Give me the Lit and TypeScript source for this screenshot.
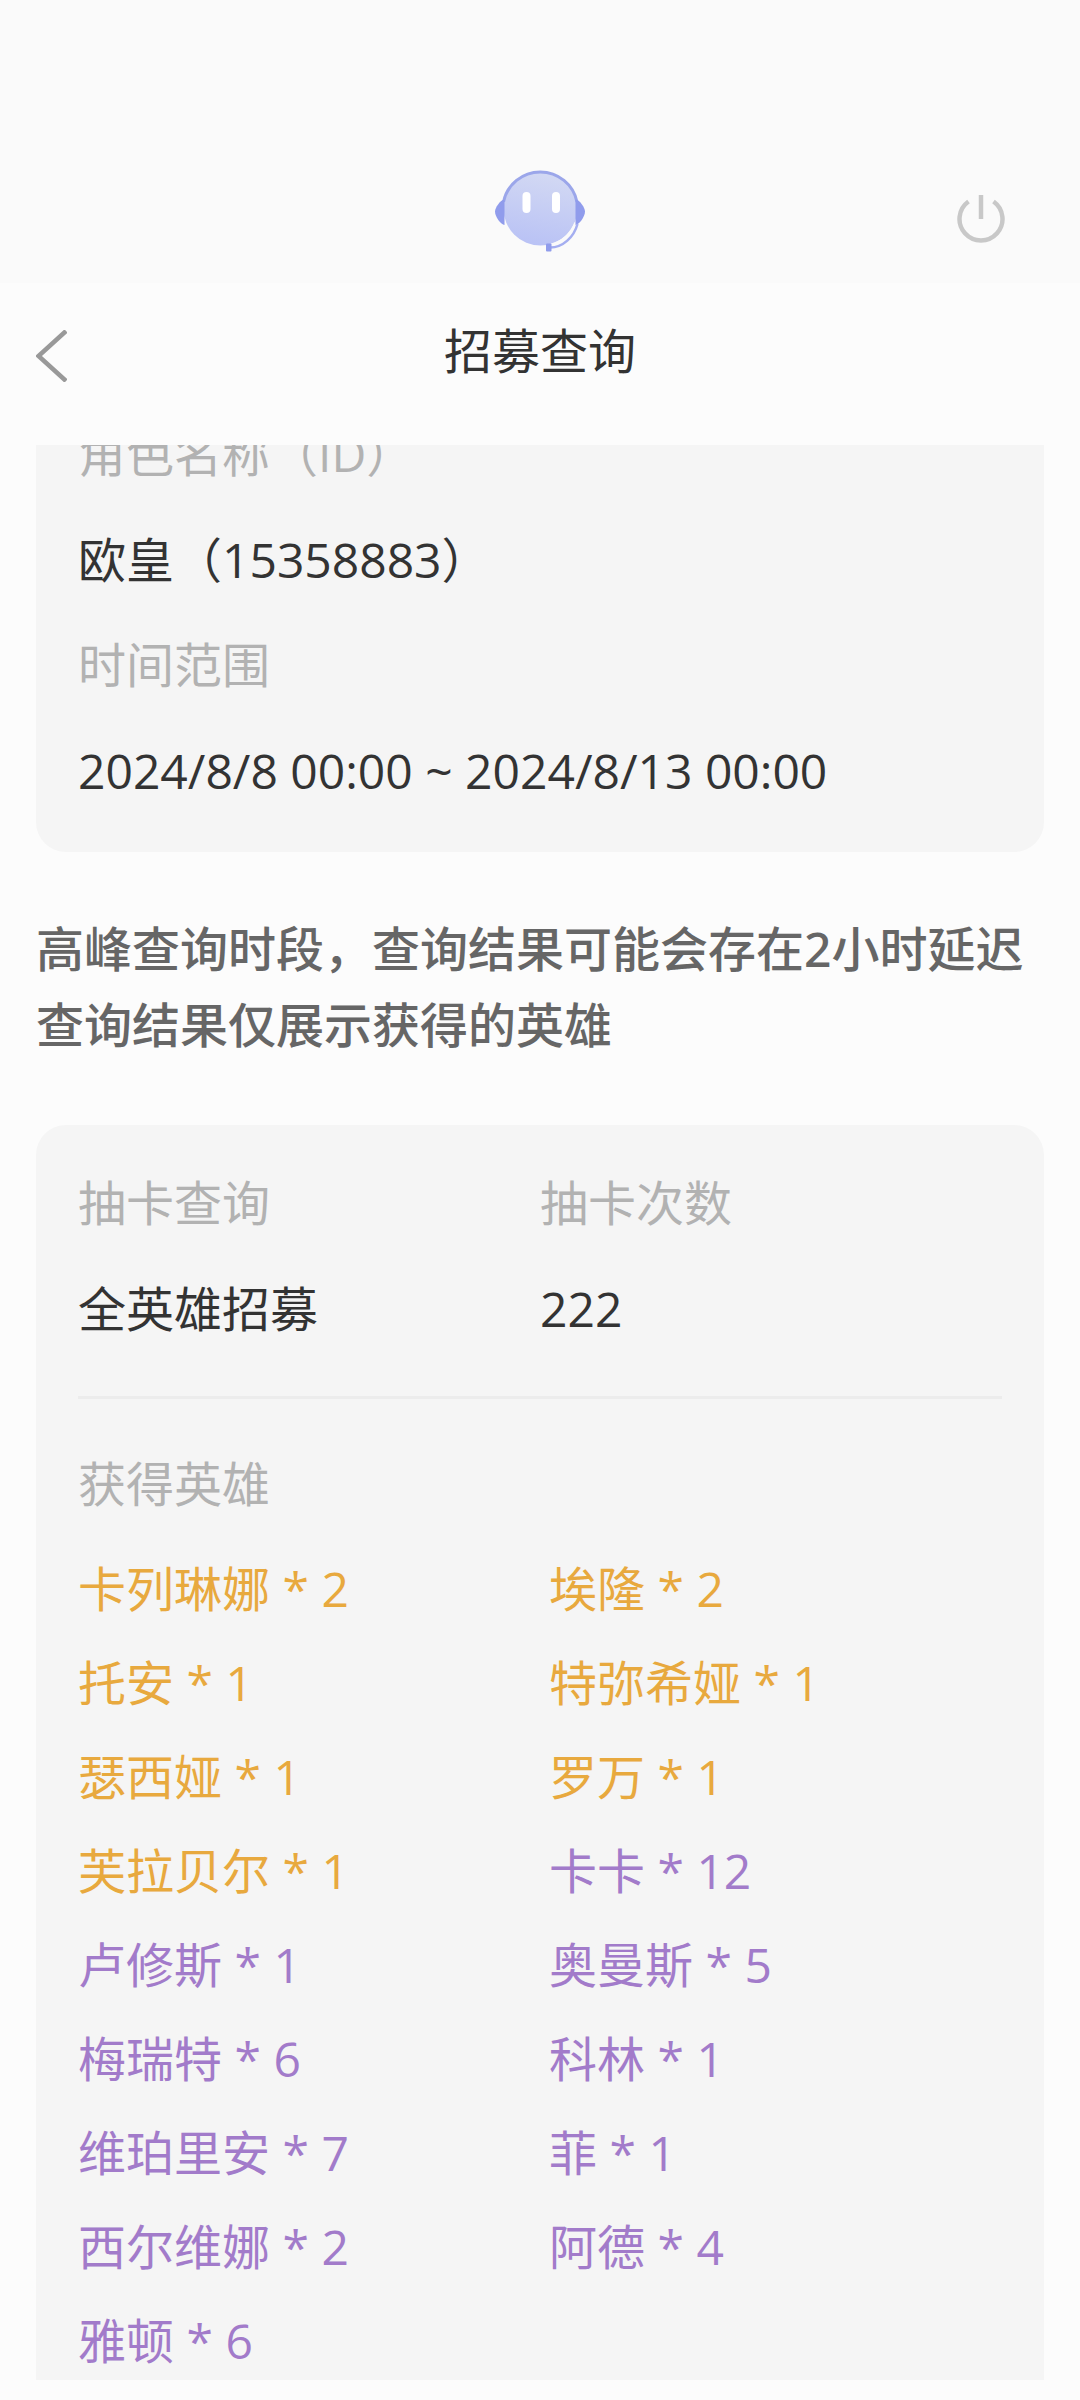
import { LitElement, html, css } from "lit";
import { customElement, property, query } from "lit/decorators.js";
import { classMap } from "lit/directives/class-map.js";

interface Hero {
  name: string;
  count: number;
  tier: "gold" | "purple";
}

const HEROES: Hero[] = [
  { name: "卡列琳娜", count: 2, tier: "gold" },
  { name: "埃隆", count: 2, tier: "gold" },
  { name: "托安", count: 1, tier: "gold" },
  { name: "特弥希娅", count: 1, tier: "gold" },
  { name: "瑟西娅", count: 1, tier: "gold" },
  { name: "罗万", count: 1, tier: "gold" },
  { name: "芙拉贝尔", count: 1, tier: "gold" },
  { name: "卡卡", count: 12, tier: "purple" },
  { name: "卢修斯", count: 1, tier: "purple" },
  { name: "奥曼斯", count: 5, tier: "purple" },
  { name: "梅瑞特", count: 6, tier: "purple" },
  { name: "科林", count: 1, tier: "purple" },
  { name: "维珀里安", count: 7, tier: "purple" },
  { name: "菲", count: 1, tier: "purple" },
  { name: "西尔维娜", count: 2, tier: "purple" },
  { name: "阿德", count: 4, tier: "purple" },
  { name: "雅顿", count: 6, tier: "purple" },
];

@customElement("app-root")
export class AppRoot extends LitElement {
  @property({ attribute: false }) heroes: Hero[] = HEROES;

  @query(".scroller") private scroller!: HTMLElement;

  static styles = css`
    :host {
      display: flex;
      flex-direction: column;
      box-sizing: border-box;
      height: 100vh;
      padding-bottom: 20px;
      background: #fcfcfc;
      color: #333;
      font-family: "Open Sans", "Noto Sans CJK SC", sans-serif;
      font-size: 48px;
    }
    button {
      display: flex;
      align-items: center;
      justify-content: center;
      margin: 0;
      padding: 0;
      border: 0;
      background: none;
      cursor: pointer;
    }
    svg {
      display: block;
    }
    .brand {
      display: grid;
      grid-template-columns: 1fr auto 1fr;
      align-items: end;
      padding: 170px 66px 31px;
      background: #fafafa;
    }
    .robot {
      grid-column: 2;
    }
    .power {
      width: 66px;
      height: 66px;
      justify-self: end;
    }
    .titlebar {
      display: grid;
      grid-template-columns: 1fr auto 1fr;
      align-items: start;
      padding: 32px 36px 48px;
    }
    .back {
      width: 60px;
      height: 82px;
      justify-content: flex-start;
    }
    .title {
      margin: 0;
      font-size: 48px;
      font-weight: 400;
      line-height: 72px;
    }
    .scroller {
      flex: 1;
      min-height: 0;
      padding: 0 36px;
      overflow-y: auto;
      scrollbar-width: none;
    }
    .card {
      padding: 25px 42px 29px;
      border-radius: 30px;
      background: #f5f5f5;
    }
    dl,
    dd,
    ul {
      margin: 0;
      padding: 0;
    }
    .label {
      margin: 0;
      color: #b2b2b2;
      font-size: 48px;
      font-weight: 400;
      line-height: 106px;
    }
    .value {
      line-height: 105px;
    }
    .note {
      margin: 0;
      padding: 59px 0 62px;
      color: #666;
      font-family: "Noto Sans", "Noto Sans CJK SC", sans-serif;
      font-weight: 500;
      line-height: 76px;
    }
    .summary {
      display: grid;
      grid-template-columns: 1fr 1fr;
      padding-bottom: 35px;
      border-bottom: 3px solid #ececec;
    }
    .obtained {
      padding-top: 32px;
    }
    .heroes {
      display: grid;
      grid-template-columns: 1fr 1fr;
      column-gap: 18px;
      padding-top: 5px;
      line-height: 94px;
      list-style: none;
    }
    .gold {
      color: #e8a93e;
    }
    .purple {
      color: #a27bca;
    }
  `;

  protected firstUpdated(): void {
    this.scroller.scrollTop = 69;
  }

  private renderRobot() {
    return html`
      <svg class="robot" width="90" height="82" viewBox="0 0 90 82" role="img" aria-label="客服">
        <defs>
          <linearGradient id="face" x1="0.6" y1="0" x2="0.4" y2="1">
            <stop offset="0" stop-color="#d3d9f3" />
            <stop offset="1" stop-color="#b9c2f5" />
          </linearGradient>
        </defs>
        <circle cx="45.5" cy="38.5" r="37" fill="url(#face)" />
        <path d="M56 75.5C69 72 77 63 81 53" fill="none" stroke="#fafafa" stroke-width="3.5" />
        <path d="M8.5 32A37.5 37.5 0 0 1 82 32" fill="none" stroke="#9ba6ea" stroke-width="3" />
        <path d="M9.5 29.5V55C6 54.5 0 47 0 41.5C0 38 5 30 9.5 29.5Z" fill="#909cec" />
        <path d="M80.5 29.5V55C84 54.5 90 47 90 41.5C90 38 85 30 80.5 29.5Z" fill="#909cec" />
        <path d="M82.5 54C79 67 68 77.5 55 77.5" fill="none" stroke="#a4aef0" stroke-width="2.5" />
        <rect x="51" y="73.5" width="5.5" height="8" rx="1" fill="#909cec" />
        <rect x="27.5" y="22" width="8" height="21" rx="4" fill="#fff" />
        <rect x="57" y="22" width="8" height="21" rx="4" fill="#fff" />
      </svg>
    `;
  }

  render() {
    return html`
      <header class="brand">
        ${this.renderRobot()}
        <button class="power" type="button" aria-label="退出">
          <svg width="48" height="48" viewBox="0 0 48 48" fill="none" stroke="#c8c8c8" stroke-width="4.5">
            <path d="M11.5 6.5A21.5 21.5 0 1 0 36.5 6.5" />
            <path d="M24 0V24" />
          </svg>
        </button>
      </header>
      <nav class="titlebar">
        <button class="back" type="button" aria-label="返回">
          <svg width="31" height="52" viewBox="0 0 31 52" fill="none" stroke="#999" stroke-width="4.5">
            <path d="M30 1L2.5 26L30 51" />
          </svg>
        </button>
        <h1 class="title">招募查询</h1>
      </nav>
      <main class="scroller">
        <dl class="card">
          <dt class="label">角色名称（ID）</dt>
          <dd class="value">欧皇（15358883）</dd>
          <dt class="label">时间范围</dt>
          <dd class="value">2024/8/8 00:00 ~ 2024/8/13 00:00</dd>
        </dl>
        <p class="note">高峰查询时段，查询结果可能会存在2小时延迟<br />查询结果仅展示获得的英雄</p>
        <section class="card">
          <dl class="summary">
            <div>
              <dt class="label">抽卡查询</dt>
              <dd class="value">全英雄招募</dd>
            </div>
            <div>
              <dt class="label">抽卡次数</dt>
              <dd class="value">222</dd>
            </div>
          </dl>
          <div class="obtained">
            <h2 class="label">获得英雄</h2>
            <ul class="heroes">
              ${this.heroes.map(
                (hero) => html`
                  <li class=${classMap({ gold: hero.tier === "gold", purple: hero.tier === "purple" })}>
                    ${hero.name} * ${hero.count}
                  </li>
                `
              )}
            </ul>
          </div>
        </section>
      </main>
    `;
  }
}
